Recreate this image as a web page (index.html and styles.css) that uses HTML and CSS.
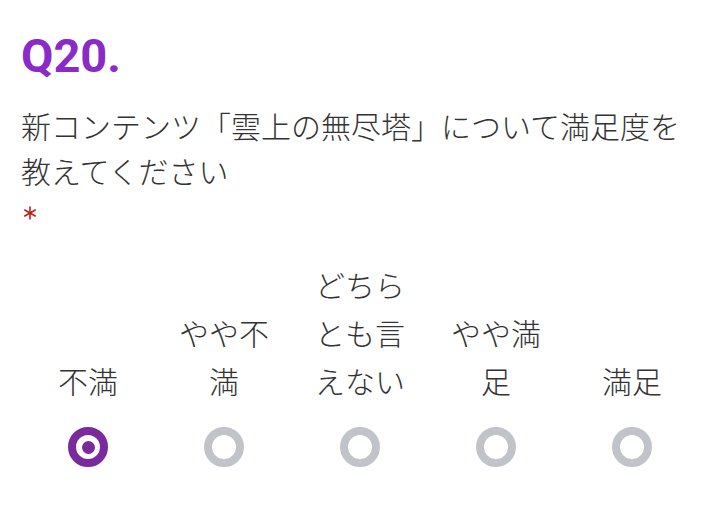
FILE: index.html
```html
<!DOCTYPE html>
<html lang="ja">
<head>
    <meta charset="UTF-8">
    <meta name="viewport" content="width=device-width, initial-scale=1.0">
    <title>Q20</title>
    <link rel="stylesheet" href="styles.css">
</head>
<body>
    <div id="question">
        <h1 class="qnum">Q20.</h1>
        <p class="qtext">新コンテンツ「雲上の無尽塔」について満足度を教えてください</p>
        <div class="required">
            <svg width="14" height="14" viewBox="0 0 14 14">
                <g stroke="#c21b1b" stroke-width="1.6" stroke-linecap="round">
                    <line x1="7" y1="1" x2="7" y2="13"/>
                    <line x1="1.8" y1="4" x2="12.2" y2="10"/>
                    <line x1="1.8" y1="10" x2="12.2" y2="4"/>
                </g>
            </svg>
        </div>
        <div class="scale">
            <label class="choice">
                <span class="label">不満</span>
                <input type="radio" name="q20" checked>
                <span class="dot"></span>
            </label>
            <label class="choice">
                <span class="label">やや不満</span>
                <input type="radio" name="q20">
                <span class="dot"></span>
            </label>
            <label class="choice">
                <span class="label">どちらとも言えない</span>
                <input type="radio" name="q20">
                <span class="dot"></span>
            </label>
            <label class="choice">
                <span class="label">やや満足</span>
                <input type="radio" name="q20">
                <span class="dot"></span>
            </label>
            <label class="choice">
                <span class="label">満足</span>
                <input type="radio" name="q20">
                <span class="dot"></span>
            </label>
        </div>
    </div>
</body>
</html>
```

FILE: styles.css
```css
*{
    box-sizing: border-box;
    font-family: Roboto, "Noto Sans CJK JP", sans-serif;
}

body{
    margin: 0;
    background-color: #fff;
    color: #333;
}

#question{
    padding: 26px 18px 0 21px;
}

.qnum{
    margin: 0;
    font-size: 47px;
    font-weight: 700;
    line-height: 60px;
    color: #8a2bc9;
}

.qtext{
    margin: 19px 0 0 0;
    font-size: 30px;
    font-weight: 300;
    line-height: 45px;
}

.required{
    height: 36px;
    display: flex;
    align-items: center;
    padding-left: 2px;
}

.scale{
    display: flex;
    margin-top: 32px;
    margin-left: -1px;
    margin-right: 2px;
}

.choice{
    flex: 1;
    display: flex;
    flex-direction: column;
    align-items: center;
    justify-content: flex-end;
    cursor: pointer;
}

.label{
    width: 100px;
    text-align: center;
    font-size: 30px;
    font-weight: 300;
    line-height: 48px;
}

.choice input{
    display: none;
}

.dot{
    width: 40px;
    height: 40px;
    margin-top: 20px;
    border: 8px solid #c0c4c9;
    border-radius: 50%;
    display: flex;
    align-items: center;
    justify-content: center;
}

.choice input:checked + .dot{
    border-color: #7a2a9c;
}

.choice input:checked + .dot::after{
    content: "";
    width: 13px;
    height: 13px;
    border-radius: 50%;
    background-color: #7a2a9c;
}
```
